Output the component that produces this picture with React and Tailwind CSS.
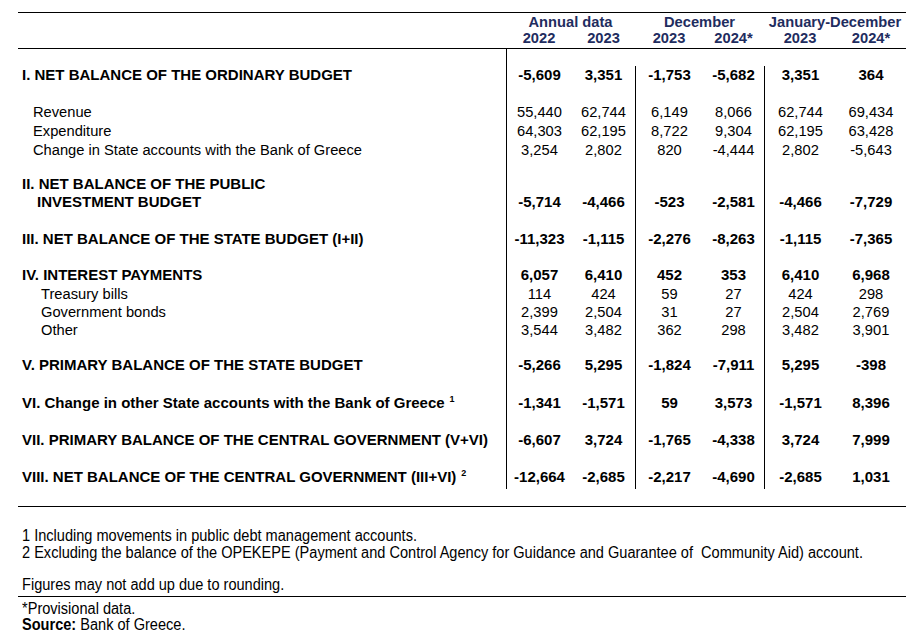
import React from "react";

const cols = "grid grid-cols-[488px_66px_63px_68px_61px_72px_70px]";

const rows = [
    { label: "I. NET BALANCE OF THE ORDINARY BUDGET", vals: ["-5,609", "3,351", "-1,753", "-5,682", "3,351", "364"], bold: true, pad: "pt-0" },
    { label: "Revenue", vals: ["55,440", "62,744", "6,149", "8,066", "62,744", "69,434"], indent: "pl-[11px]", pad: "pt-[19px]" },
    { label: "Expenditure", vals: ["64,303", "62,195", "8,722", "9,304", "62,195", "63,428"], indent: "pl-[11px]", pad: "pt-px" },
    { label: "Change in State accounts with the Bank of Greece", vals: ["3,254", "2,802", "820", "-4,444", "2,802", "-5,643"], indent: "pl-[11px]", pad: "pt-px" },
    { label: "II. NET BALANCE OF THE PUBLIC", label2: "INVESTMENT BUDGET", vals: ["-5,714", "-4,466", "-523", "-2,581", "-4,466", "-7,729"], bold: true, pad: "pt-[16px]" },
    { label: "III. NET BALANCE OF THE STATE BUDGET (I+II)", vals: ["-11,323", "-1,115", "-2,276", "-8,263", "-1,115", "-7,365"], bold: true, pad: "pt-[19px]" },
    { label: "IV. INTEREST PAYMENTS", vals: ["6,057", "6,410", "452", "353", "6,410", "6,968"], bold: true, pad: "pt-[18px]" },
    { label: "Treasury bills", vals: ["114", "424", "59", "27", "424", "298"], indent: "pl-[19px]", pad: "pt-px" },
    { label: "Government bonds", vals: ["2,399", "2,504", "31", "27", "2,504", "2,769"], indent: "pl-[19px]", pad: "pt-0" },
    { label: "Other", vals: ["3,544", "3,482", "362", "298", "3,482", "3,901"], indent: "pl-[19px]", pad: "pt-0" },
    { label: "V. PRIMARY BALANCE OF THE STATE BUDGET", vals: ["-5,266", "5,295", "-1,824", "-7,911", "5,295", "-398"], bold: true, pad: "pt-[17px]" },
    { label: "VI. Change in other State accounts with the Bank of Greece", sup: "1", vals: ["-1,341", "-1,571", "59", "3,573", "-1,571", "8,396"], bold: true, pad: "pt-[20px]" },
    { label: "VII. PRIMARY BALANCE OF THE CENTRAL GOVERNMENT (V+VI)", vals: ["-6,607", "3,724", "-1,765", "-4,338", "3,724", "7,999"], bold: true, pad: "pt-[19px]" },
    { label: "VIII. NET BALANCE OF THE CENTRAL GOVERNMENT (III+VI)", sup: "2", vals: ["-12,664", "-2,685", "-2,217", "-4,690", "-2,685", "1,031"], bold: true, pad: "pt-[19px]" },
];

function Row({ row }) {
    const weight = row.bold ? "font-bold text-[15px]" : "text-[14.7px]";
    return (
        <div className={cols}>
            <div className={`flex flex-col justify-end pl-[4px] ${row.pad} ${weight}`}>
                <div className={row.indent || ""}>
                    {row.label}
                    {row.sup && <sup className="ml-[5px] text-[9px] -top-[6px]">{row.sup}</sup>}
                </div>
                {row.label2 && <div className="pl-[15px]">{row.label2}</div>}
            </div>
            {row.vals.map((v, i) => (
                <div
                    key={i}
                    className={`flex items-end justify-center ${row.pad} ${weight} ${i % 2 === 0 ? "border-l border-black" : ""}`}
                >
                    {v}
                </div>
            ))}
        </div>
    );
}

export default function App() {
    return (
        <div className="w-[916px] h-[640px] bg-white text-black font-['Liberation_Sans',Arial,sans-serif] text-[14px] leading-[18px] overflow-hidden">
            <div className="ml-[18px] w-[888px] pt-[12px]">

                {/* HEADER */}
                <div className="border-t border-b border-black text-[#1f2d5f] font-bold text-[14.7px]">
                    <div className={`${cols} pt-px leading-[16px]`}>
                        <div></div>
                        <div className="col-span-2 text-center">Annual data</div>
                        <div className="col-span-2 text-center">December</div>
                        <div className="col-span-2 text-center">January-December</div>
                    </div>
                    <div className={`${cols} pb-px leading-[17px]`}>
                        <div></div>
                        <div className="text-center">2022</div>
                        <div className="text-center">2023</div>
                        <div className="text-center">2023</div>
                        <div className="text-center">2024*</div>
                        <div className="text-center">2023</div>
                        <div className="text-center">2024*</div>
                    </div>
                </div>

                {/* BODY */}
                <div className={`${cols} h-[17px]`}>
                    <div></div>
                    <div className="border-l border-black"></div>
                </div>
                {rows.map((r, i) => (
                    <Row key={i} row={r} />
                ))}
                <div className={`${cols} h-[3px]`}>
                    <div></div>
                    <div className="border-l border-black"></div>
                    <div></div>
                    <div className="border-l border-black"></div>
                    <div></div>
                    <div className="border-l border-black"></div>
                    <div></div>
                </div>

                {/* FOOTER */}
                <div className="mt-[17px] border-t border-black pt-[20px] pl-[4px] text-[16px] leading-[17px]">
                    <div className="whitespace-nowrap scale-x-[0.91] origin-left">
                        <p>1 Including movements in public debt management accounts.</p>
                        <p>2 Excluding the balance of the OPEKEPE (Payment and Control Agency for Guidance and Guarantee of{"\u00a0"} Community Aid) account.</p>
                        <p className="mt-[15px]">Figures may not add up due to rounding.</p>
                    </div>
                </div>
                <div className="mt-[3px] border-t border-black pt-[4px] pl-[4px] text-[16px] leading-[16px]">
                    <div className="whitespace-nowrap scale-x-[0.91] origin-left">
                        <p>*Provisional data.</p>
                        <p><span className="font-bold">Source:</span> Bank of Greece.</p>
                    </div>
                </div>

            </div>
        </div>
    );
}
